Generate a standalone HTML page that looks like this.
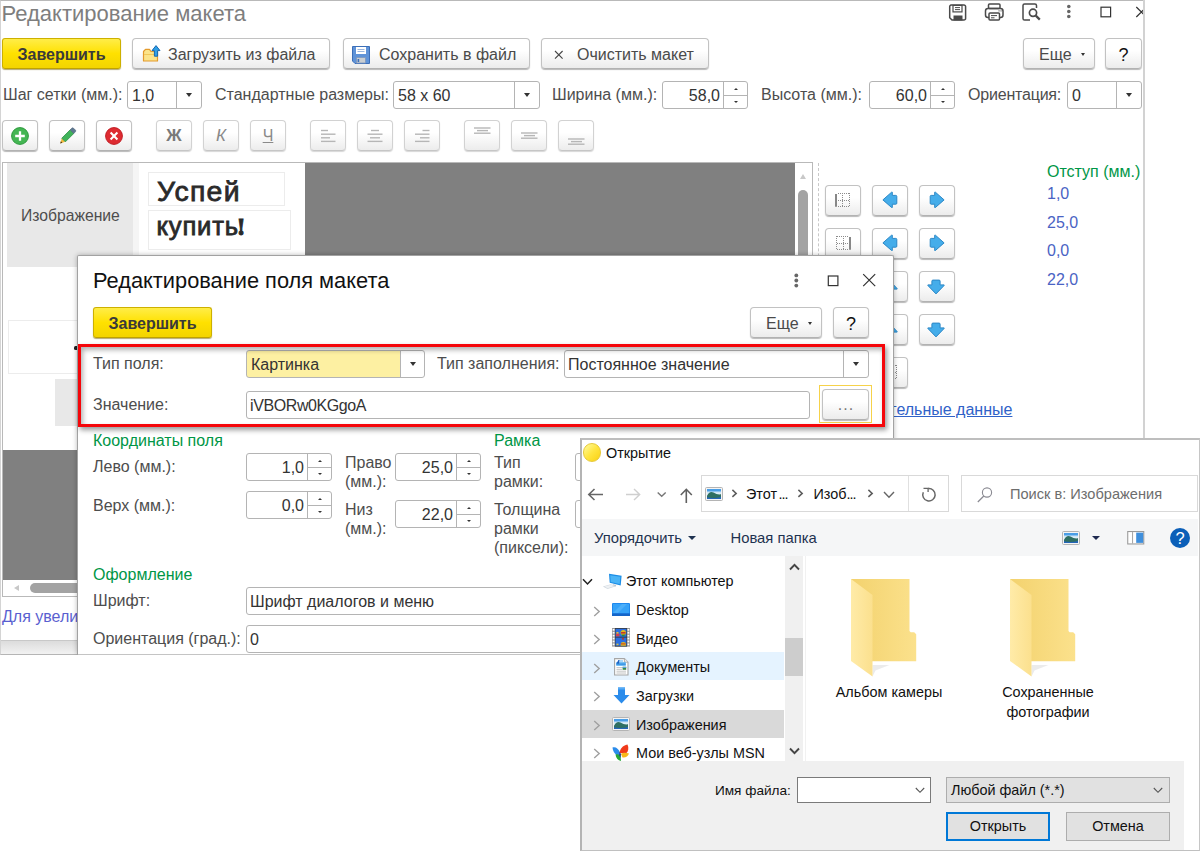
<!DOCTYPE html>
<html lang="ru"><head><meta charset="utf-8"><title>Редактирование макета</title>
<style>
html,body{margin:0;padding:0;background:#fff;}
body{width:1200px;height:853px;position:relative;overflow:hidden;font-family:"Liberation Sans",sans-serif;font-size:16px;color:#444;}
.a{position:absolute;white-space:nowrap;}
.btn{position:absolute;box-sizing:border-box;border:1px solid #c2c2c2;border-bottom-color:#b2b2b2;border-radius:4px;background:linear-gradient(#ffffff,#ffffff 40%,#ececec);box-shadow:0 1px 1px rgba(0,0,0,.28);white-space:nowrap;color:#4a4a4a;}
.ybtn{position:absolute;box-sizing:border-box;border:1px solid #cdb000;border-bottom-color:#bfa200;border-radius:3px;background:linear-gradient(#ffed48,#ffe100 50%,#f3d400);box-shadow:0 1px 1px rgba(120,100,0,.55);font-weight:bold;color:#3a3a3a;text-align:center;}
.inp{position:absolute;box-sizing:border-box;border:1px solid #b4b4b4;border-radius:3px;background:#fff;white-space:nowrap;color:#333;}
.lbl{position:absolute;white-space:nowrap;color:#4d4d4d;}
.grn{color:#009646;}
.sep{position:absolute;top:0;bottom:0;width:1px;background:#b4b4b4;}
.dd{position:absolute;width:0;height:0;border-left:3.5px solid transparent;border-right:3.5px solid transparent;border-top:4px solid #333;margin-left:.5px;margin-top:-.5px;}
.sph{position:absolute;left:61px;width:23px;top:13px;height:1px;background:#b4b4b4;}
.su{position:absolute;left:70.5px;top:6px;width:0;height:0;border-left:2px solid transparent;border-right:2px solid transparent;border-bottom:2.5px solid #333;}
.sd{position:absolute;left:70.5px;top:19px;width:0;height:0;border-left:2px solid transparent;border-right:2px solid transparent;border-top:2.5px solid #333;}
.dis{border-color:#d2d2d2;border-bottom-color:#c6c6c6;box-shadow:0 1px 1px rgba(0,0,0,.16);}
.fdt{font-size:14.4px;color:#111;}
.fdt .a{color:inherit;}
.seg{font-family:"DejaVu Sans","Liberation Sans",sans-serif;}
</style></head><body>

<!-- ================= MAIN WINDOW ================= -->
<div class="a" id="main" style="left:0;top:0;width:1145px;height:655px;box-sizing:border-box;border-top:1px solid #b9b9b9;border-left:1px solid #d4d4d4;border-right:2px solid #d2d2d2;border-bottom:1px solid #b5b5b5;background:#fff;"></div>
<div class="a" style="left:1px;top:640px;width:1142px;height:14px;border-top:1px solid #c8c8c8;box-sizing:border-box;background:linear-gradient(#dcdcdc,#f2f2f2);"></div>

<div class="a" style="left:1.5px;top:0px;font-size:22px;line-height:28px;color:#7e7e7e;">Редактирование макета</div>

<!-- title icons -->
<svg class="a" style="left:946px;top:1px;" width="197" height="24" viewBox="946 1 197 24" fill="none" stroke="#4a4a4a" stroke-width="1.5">
 <path d="M950.5 5h13.5a1.6 1.6 0 0 1 1.6 1.6v11.8a1.6 1.6 0 0 1-1.6 1.6h-12l-2.3-2.3v-11.1a1.6 1.6 0 0 1 1.6-1.6z"/>
 <rect x="953" y="5.4" width="9" height="6.5" stroke-width="1.2"/>
 <path d="M955 7.6h5M955 9.6h5" stroke-width="1"/>
 <rect x="954" y="16" width="8" height="4" fill="#4a4a4a" stroke-width="1"/>
 <rect x="988.5" y="4" width="11.5" height="4.5" rx="1"/>
 <rect x="985.5" y="8.5" width="17.5" height="9" rx="2.5"/>
 <rect x="989" y="13" width="10.5" height="7" rx="1" fill="#fff"/>
 <path d="M991 15.6h6M991 17.8h3.5" stroke-width="1"/>
 <path d="M998.6 10.8h.9M1000.6 10.8h.9" stroke-width="1.2"/>
 <path d="M1036.5 8v-2.4a1.6 1.6 0 0 0-1.6-1.6h-10.3a1.6 1.6 0 0 0-1.6 1.6v12.8a1.6 1.6 0 0 0 1.6 1.6h5.4"/>
 <circle cx="1033" cy="12.8" r="3.6" stroke-width="1.7"/>
 <path d="M1035.8 15.6l4 4" stroke-width="2.2"/>
 <g fill="#666" stroke="none"><circle cx="1068.8" cy="6.500" r="1.800"/><circle cx="1068.8" cy="11.500" r="1.800"/><circle cx="1068.8" cy="16.500" r="1.800"/></g>
 <rect x="1101" y="7.2" width="9.6" height="9.6" stroke-width="1.2" stroke="#333"/>
 <path d="M1136.3 7l10 10M1136.3 17l10-10" stroke-width="1.2" stroke="#333"/>
</svg>
<div class="a" style="left:1143px;top:0;width:2px;height:655px;background:#d2d2d2;"></div>

<!-- toolbar row 1 -->
<div class="ybtn" style="left:2px;top:38px;width:119px;height:31px;line-height:31px;">Завершить</div>
<div class="btn" style="left:132px;top:38px;width:198px;height:31px;line-height:31px;">
 <svg class="a" style="left:8px;top:5px;" width="22" height="20" viewBox="0 0 22 20"><path d="M2.5 7.5l2-2.2h4l1.5 2.2h6.5v9.5h-14z" fill="#fbe48a" stroke="#e39a2d" stroke-width="1.2" stroke-linejoin="round"/><path d="M3 10.5h13" stroke="#f1c75a" stroke-width="1"/><path d="M15 1.6l4 5h-2.4v5.6h-3.2v-5.6h-2.4z" fill="#2f9fe6" stroke="#1568b0" stroke-width="1" stroke-linejoin="round"/></svg>
 <span class="a" style="left:35px;">Загрузить из файла</span></div>
<div class="btn" style="left:343px;top:38px;width:187px;height:31px;line-height:31px;">
 <svg class="a" style="left:8px;top:7px;" width="18" height="18" viewBox="0 0 18 18"><path d="M.5.5h17v17h-14.5l-2.5-2.5z" fill="#5f93d8" stroke="#3c6fb8" stroke-width="1"/><rect x="4" y="1" width="10" height="7" fill="#fff"/><path d="M5.5 3.5h7M5.5 5.5h7" stroke="#9cb7de" stroke-width="1"/><rect x="4.5" y="11.5" width="9" height="5.5" fill="#c9ced2" stroke="#7d97bd" stroke-width=".8"/><rect x="5.6" y="13" width="1.6" height="3" fill="#3c6fb8"/></svg>
 <span class="a" style="left:35px;">Сохранить в файл</span></div>
<div class="btn" style="left:541px;top:38px;width:168px;height:31px;line-height:31px;"><svg class="a" style="left:12px;top:11px;" width="10" height="10" viewBox="0 0 10 10"><path d="M1 1l7.600 7.600M8.600 1l-7.600 7.600" stroke="#444" stroke-width="1.100" fill="none"/></svg><span class="a" style="left:35px;">Очистить макет</span></div>
<div class="btn" style="left:1023px;top:38px;width:72px;height:31px;line-height:31px;"><span class="a" style="left:15px;">Еще</span><i class="dd" style="left:56px;top:14px;border-width:3px 2.500px 0 2.500px;border-top:3px solid #333;"></i></div>
<div class="btn" style="left:1105px;top:38px;width:37px;height:31px;line-height:33.5px;text-align:center;font-size:18px;color:#111;">?</div>

<!-- row 2 -->
<div class="lbl" style="left:3px;top:86px;">Шаг сетки (мм.):</div>
<div class="inp" style="left:127px;top:81px;width:75px;height:28px;line-height:27.5px;"><span class="a" style="left:4px;">1,0</span><i class="sep" style="left:48px;"></i><i class="dd" style="left:57px;top:11px;"></i></div>
<div class="lbl" style="left:215px;top:86px;">Стандартные размеры:</div>
<div class="inp" style="left:393px;top:81px;width:147px;height:28px;line-height:27.5px;"><span class="a" style="left:4px;">58 x 60</span><i class="sep" style="left:120px;"></i><i class="dd" style="left:129px;top:11px;"></i></div>
<div class="lbl" style="left:552px;top:86px;">Ширина (мм.):</div>
<div class="inp spin" style="left:662px;top:81px;width:86px;height:28px;line-height:27.5px;"><span class="a" style="right:27px;">58,0</span><i class="sep" style="left:60px;"></i><i class="sph"></i><i class="su"></i><i class="sd"></i></div>
<div class="lbl" style="left:761px;top:86px;">Высота (мм.):</div>
<div class="inp spin" style="left:869px;top:81px;width:86px;height:28px;line-height:27.5px;"><span class="a" style="right:27px;">60,0</span><i class="sep" style="left:60px;"></i><i class="sph"></i><i class="su"></i><i class="sd"></i></div>
<div class="lbl" style="left:968px;top:86px;letter-spacing:-.2px;">Ориентация:</div>
<div class="inp" style="left:1067px;top:81px;width:75px;height:28px;line-height:27.5px;"><span class="a" style="left:4px;">0</span><i class="sep" style="left:48px;"></i><i class="dd" style="left:57px;top:11px;"></i></div>

<!-- row 3 -->
<div class="btn" style="left:2px;top:120px;width:36px;height:31px;"><svg class="a" style="left:7px;top:5px;" width="20" height="20" viewBox="0 0 20 20"><circle cx="10" cy="10" r="8.4" fill="#44b653" stroke="#2f9b3f" stroke-width="1"/><path d="M10 5.2v9.6M5.2 10h9.6" stroke="#fff" stroke-width="2.3"/></svg></div>
<div class="btn" style="left:49px;top:120px;width:36px;height:31px;"><svg class="a" style="left:6.5px;top:3.5px;" width="22" height="22" viewBox="0 0 22 22"><path d="M3.2 18.4l1.6-5.2 3.6 3.6z" fill="#f2b93c"/><path d="M3.2 18.4l.7-2.2 1.5 1.5z" fill="#4a3a20"/><path d="M4.8 13.2l8.4-8.4 3.6 3.6-8.4 8.4z" fill="#41b35a" stroke="#2d8f45" stroke-width=".8"/><path d="M13.2 4.8l1.6-1.6a1.2 1.2 0 0 1 1.7 0l1.9 1.9a1.2 1.2 0 0 1 0 1.7l-1.6 1.6z" fill="#5f7890" stroke="#4a6078" stroke-width=".6"/></svg></div>
<div class="btn" style="left:96px;top:120px;width:36px;height:31px;"><svg class="a" style="left:7px;top:5px;" width="20" height="20" viewBox="0 0 20 20"><circle cx="10" cy="10" r="8.4" fill="#de2b31" stroke="#c21f26" stroke-width="1"/><path d="M6.6 6.6l6.8 6.8M13.4 6.6l-6.8 6.8" stroke="#fff" stroke-width="2.1"/></svg></div>
<div class="btn dis" style="left:156px;top:120px;width:36px;height:31px;"><span class="a" style="left:0;width:34px;text-align:center;top:0;line-height:29px;font-weight:bold;color:#7a7a7a;font-size:17px;">Ж</span></div>
<div class="btn dis" style="left:203px;top:120px;width:36px;height:31px;"><span class="a" style="left:0;width:34px;text-align:center;top:0;line-height:29px;font-style:italic;color:#8a8a8a;font-size:17px;">К</span></div>
<div class="btn dis" style="left:250px;top:120px;width:36px;height:31px;"><span class="a" style="left:0;width:34px;text-align:center;top:0;line-height:29px;color:#8a8a8a;font-size:16px;text-decoration:underline;">Ч</span></div>
<div class="btn dis" style="left:310px;top:120px;width:36px;height:31px;"><svg class="a" style="left:0;top:0;" width="34" height="29" viewBox="0 0 34 29" stroke="#b6b6b6" stroke-width="1.4"><path d="M10 9.5h7"/><path d="M10 13.2h14.5"/><path d="M10 16.8h9"/><path d="M10 20.4h14.5"/></svg></div>
<div class="btn dis" style="left:357px;top:120px;width:36px;height:31px;"><svg class="a" style="left:0;top:0;" width="34" height="29" viewBox="0 0 34 29" stroke="#b6b6b6" stroke-width="1.4"><path d="M13 9.5h8"/><path d="M9.5 13.2h15.0"/><path d="M12 16.8h10"/><path d="M9.5 20.4h15.0"/></svg></div>
<div class="btn dis" style="left:404px;top:120px;width:36px;height:31px;"><svg class="a" style="left:0;top:0;" width="34" height="29" viewBox="0 0 34 29" stroke="#b6b6b6" stroke-width="1.4"><path d="M17.5 9.5h7.0"/><path d="M10 13.2h14.5"/><path d="M15 16.8h9.5"/><path d="M10 20.4h14.5"/></svg></div>
<div class="btn dis" style="left:464px;top:120px;width:36px;height:31px;"><svg class="a" style="left:0;top:0;" width="34" height="29" viewBox="0 0 34 29" stroke="#b6b6b6" stroke-width="1.4"><path d="M9 7h16.5"/><path d="M12 9.6h11"/><path d="M9 12.2h16.5"/></svg></div>
<div class="btn dis" style="left:511px;top:120px;width:36px;height:31px;"><svg class="a" style="left:0;top:0;" width="34" height="29" viewBox="0 0 34 29" stroke="#b6b6b6" stroke-width="1.4"><path d="M9 12h16.5"/><path d="M12 14.6h11"/><path d="M9 17.2h16.5"/></svg></div>
<div class="btn dis" style="left:558px;top:120px;width:36px;height:31px;"><svg class="a" style="left:0;top:0;" width="34" height="29" viewBox="0 0 34 29" stroke="#b6b6b6" stroke-width="1.4"><path d="M9 18h16.5"/><path d="M12 20.6h11"/><path d="M9 23.2h16.5"/></svg></div>

<!-- canvas -->
<div class="a" style="left:2px;top:162px;width:811px;height:435px;box-sizing:border-box;border:1px solid #b9b9b9;background:#fff;"></div>
<div class="a" style="left:3px;top:163px;width:792px;height:417px;background:#808080;"></div>
<div class="a" style="left:3px;top:163px;width:302px;height:287px;background:#fff;"></div>
<div class="a" style="left:7px;top:163px;width:126px;height:104px;background:#e8e8e8;"></div>
<div class="a" style="left:133px;top:163px;width:6px;height:104px;background:#f5f5f5;"></div>
<div class="a" style="left:21px;top:206px;font-size:15.7px;line-height:19px;color:#4d4d4d;">Изображение</div>
<div class="a" style="left:148px;top:172px;width:137px;height:34px;box-sizing:border-box;border:1px solid #ececec;"></div>
<div class="a" style="left:148px;top:210px;width:143px;height:40px;box-sizing:border-box;border:1px solid #ececec;"></div>
<div class="a" style="left:157px;top:175px;font-size:28.4px;line-height:32px;color:#2a2a2a;-webkit-text-stroke:.8px #2a2a2a;letter-spacing:1.3px;">Успей</div>
<div class="a" style="left:156.5px;top:210px;font-size:25.6px;line-height:32px;color:#2a2a2a;-webkit-text-stroke:.8px #2a2a2a;letter-spacing:.8px;">купить<span style="font-family:'DejaVu Serif','Liberation Serif',serif;font-size:22px;margin-left:-2.5px;font-weight:bold;-webkit-text-stroke:.9px #2a2a2a;letter-spacing:0;">!</span></div>
<div class="a" style="left:8px;top:320px;width:80px;height:54px;box-sizing:border-box;border:1px solid #ececec;"></div>
<div class="a" style="left:73.5px;top:345.5px;width:5px;height:4px;background:#222;border-radius:1.5px;"></div>
<div class="a" style="left:55px;top:379px;width:40px;height:47px;background:#e8e8e8;"></div>
<!-- canvas scrollbars -->
<div class="a" style="left:795px;top:163px;width:17px;height:433px;background:#fff;"></div>
<div class="a" style="left:798px;top:190px;width:10px;height:200px;background:#a3a3a3;border-radius:5px;"></div>
<div class="a" style="left:800px;top:174px;width:0;height:0;border-left:3px solid transparent;border-right:3px solid transparent;border-bottom:5px solid #c8c8c8;"></div>
<div class="a" style="left:3px;top:580px;width:792px;height:16px;background:#fff;"></div>
<div class="a" style="left:30px;top:583px;width:200px;height:10px;background:#a3a3a3;border-radius:5px;"></div>
<div class="a" style="left:14px;top:585px;width:0;height:0;border-top:3px solid transparent;border-bottom:3px solid transparent;border-right:5px solid #c8c8c8;"></div>
<div class="a" style="left:2px;top:607px;font-size:16px;line-height:19px;color:#5a5fd0;">Для увеличения</div>

<!-- right panel -->
<div class="a" style="left:818px;top:163px;width:0;height:440px;border-left:1px dashed #c8c8c8;"></div>
<div class="btn" style="left:825px;top:185px;width:36px;height:31px;"><svg class="a" style="left:-1px;top:-1px;" width="36" height="31" viewBox="0 0 36 31"><g><g stroke="#8c8c8c" stroke-width="1" stroke-dasharray="1 1" fill="none"><path d="M13 8.500h12M13 15.500h12M13 21.500h12M17.500 8v14M24.500 8v14"/></g><path d="M11 9v12.800" stroke="#7a7a7a" stroke-width="1.800"/></g></svg></div>
<div class="btn" style="left:872px;top:185px;width:36px;height:31px;"><svg class="a" style="left:-1px;top:-1px;" width="36" height="31" viewBox="0 0 36 31"><path d="M10.9 14.9L19.6 7.2h.7v3.2h3.5q1 0 1 1v6.800q0 1-1 1h-3.500v3.300h-.700z" fill="#45adea" stroke="#2b87c6" stroke-width="1" stroke-linejoin="round"/></svg></div>
<div class="btn" style="left:919px;top:185px;width:36px;height:31px;"><svg class="a" style="left:-1px;top:-1px;" width="36" height="31" viewBox="0 0 36 31"><path d="M10.9 14.9L19.6 7.2h.7v3.2h3.5q1 0 1 1v6.800q0 1-1 1h-3.500v3.300h-.700z" transform="translate(36,0) scale(-1,1)" fill="#45adea" stroke="#2b87c6" stroke-width="1" stroke-linejoin="round"/></svg></div>
<div class="btn" style="left:825px;top:228px;width:36px;height:31px;"><svg class="a" style="left:-1px;top:-1px;" width="36" height="31" viewBox="0 0 36 31"><g transform="translate(36,0) scale(-1,1)"><g stroke="#8c8c8c" stroke-width="1" stroke-dasharray="1 1" fill="none"><path d="M13 8.500h12M13 15.500h12M13 21.500h12M17.500 8v14M24.500 8v14"/></g><path d="M11 9v12.800" stroke="#7a7a7a" stroke-width="1.800"/></g></svg></div>
<div class="btn" style="left:872px;top:228px;width:36px;height:31px;"><svg class="a" style="left:-1px;top:-1px;" width="36" height="31" viewBox="0 0 36 31"><path d="M10.9 14.9L19.6 7.2h.7v3.2h3.5q1 0 1 1v6.800q0 1-1 1h-3.500v3.300h-.700z" fill="#45adea" stroke="#2b87c6" stroke-width="1" stroke-linejoin="round"/></svg></div>
<div class="btn" style="left:919px;top:228px;width:36px;height:31px;"><svg class="a" style="left:-1px;top:-1px;" width="36" height="31" viewBox="0 0 36 31"><path d="M10.9 14.9L19.6 7.2h.7v3.2h3.5q1 0 1 1v6.800q0 1-1 1h-3.500v3.300h-.700z" transform="translate(36,0) scale(-1,1)" fill="#45adea" stroke="#2b87c6" stroke-width="1" stroke-linejoin="round"/></svg></div>
<div class="btn" style="left:825px;top:271px;width:36px;height:31px;"><svg class="a" style="left:-1px;top:-1px;" width="36" height="31" viewBox="0 0 36 31"><g><g stroke="#8c8c8c" stroke-width="1" stroke-dasharray="1 1" fill="none"><path d="M13 8.500h12M13 15.500h12M13 21.500h12M17.500 8v14M24.500 8v14"/></g><path d="M11 9v12.800" stroke="#7a7a7a" stroke-width="1.800"/></g></svg></div>
<div class="btn" style="left:872px;top:271px;width:36px;height:31px;"><svg class="a" style="left:-1px;top:-1px;" width="36" height="31" viewBox="0 0 36 31"><path d="M17 22.9L8.900 14.500v-.600h4v-3.800q0-1 1-1h6.200q1 0 1 1v3.800h4v.600z" transform="translate(0,32) scale(1,-1)" fill="#45adea" stroke="#2b87c6" stroke-width="1" stroke-linejoin="round"/></svg></div>
<div class="btn" style="left:919px;top:271px;width:36px;height:31px;"><svg class="a" style="left:-1px;top:-1px;" width="36" height="31" viewBox="0 0 36 31"><path d="M17 22.9L8.900 14.500v-.600h4v-3.800q0-1 1-1h6.200q1 0 1 1v3.800h4v.600z" fill="#45adea" stroke="#2b87c6" stroke-width="1" stroke-linejoin="round"/></svg></div>
<div class="btn" style="left:825px;top:314px;width:36px;height:31px;"><svg class="a" style="left:-1px;top:-1px;" width="36" height="31" viewBox="0 0 36 31"><g><g stroke="#8c8c8c" stroke-width="1" stroke-dasharray="1 1" fill="none"><path d="M13 8.500h12M13 15.500h12M13 21.500h12M17.500 8v14M24.500 8v14"/></g><path d="M11 9v12.800" stroke="#7a7a7a" stroke-width="1.800"/></g></svg></div>
<div class="btn" style="left:872px;top:314px;width:36px;height:31px;"><svg class="a" style="left:-1px;top:-1px;" width="36" height="31" viewBox="0 0 36 31"><path d="M17 22.9L8.900 14.500v-.600h4v-3.800q0-1 1-1h6.200q1 0 1 1v3.800h4v.600z" transform="translate(0,32) scale(1,-1)" fill="#45adea" stroke="#2b87c6" stroke-width="1" stroke-linejoin="round"/></svg></div>
<div class="btn" style="left:919px;top:314px;width:36px;height:31px;"><svg class="a" style="left:-1px;top:-1px;" width="36" height="31" viewBox="0 0 36 31"><path d="M17 22.9L8.900 14.500v-.600h4v-3.800q0-1 1-1h6.200q1 0 1 1v3.800h4v.600z" fill="#45adea" stroke="#2b87c6" stroke-width="1" stroke-linejoin="round"/></svg></div>
<div class="btn" style="left:825px;top:357px;width:36px;height:31px;"><svg class="a" style="left:-1px;top:-1px;" width="36" height="31" viewBox="0 0 36 31"><g><g stroke="#8c8c8c" stroke-width="1" stroke-dasharray="1 1" fill="none"><path d="M13 8.500h12M13 15.500h12M13 21.500h12M17.500 8v14M24.500 8v14"/></g><path d="M11 9v12.800" stroke="#7a7a7a" stroke-width="1.800"/></g></svg></div>
<div class="btn" style="left:872px;top:357px;width:36px;height:31px;"><svg class="a" style="left:-1px;top:-1px;" width="36" height="31" viewBox="0 0 36 31"><g><g stroke="#8c8c8c" stroke-width="1" stroke-dasharray="1 1" fill="none"><path d="M13 8.500h12M13 15.500h12M13 21.500h12M17.500 8v14M24.500 8v14"/></g><path d="M11 9v12.800" stroke="#7a7a7a" stroke-width="1.800"/></g></svg></div>
<div class="a grn" style="left:1047px;top:162px;font-size:16px;line-height:19px;">Отступ (мм.)</div>
<div class="a" style="left:1047px;top:184px;font-size:16px;line-height:19px;color:#4a63c4;">1,0</div>
<div class="a" style="left:1047px;top:213px;font-size:16px;line-height:19px;color:#4a63c4;">25,0</div>
<div class="a" style="left:1047px;top:241px;font-size:16px;line-height:19px;color:#4a63c4;">0,0</div>
<div class="a" style="left:1047px;top:270px;font-size:16px;line-height:19px;color:#4a63c4;">22,0</div>
<div class="a" style="left:825px;top:400px;font-size:16px;line-height:19px;color:#2f62c8;text-decoration:underline;">Дополнительные данные</div>

<!-- ================= FIELD DIALOG ================= -->
<div class="a" id="dlg" style="left:77px;top:255px;width:817px;height:400px;box-sizing:border-box;border:1px solid #a2a2a2;border-bottom:none;border-radius:2px 2px 0 0;background:#fff;box-shadow:0 0 5px rgba(0,0,0,.28);clip-path:inset(-10px -10px 0 -10px);"></div>
<div class="a" style="left:78px;top:654px;width:815px;height:1px;background:#c4c4c4;"></div>
<div class="a" style="left:93px;top:266.5px;font-size:21.8px;line-height:28px;color:#111;">Редактирование поля макета</div>
<svg class="a" style="left:790px;top:270px;" width="92" height="22" viewBox="790 270 92 22" fill="none" stroke="#333" stroke-width="1.2">
 <g fill="#666" stroke="none"><circle cx="796.3" cy="275.4" r="1.900"/><circle cx="796.3" cy="280.5" r="1.900"/><circle cx="796.3" cy="285.6" r="1.900"/></g>
 <rect x="828.3" y="276" width="9.6" height="9.6"/>
 <path d="M863.2 274.2l12 12M863.2 286.2l12-12"/>
</svg>
<div class="ybtn" style="left:93px;top:307px;width:119px;height:31px;line-height:31px;">Завершить</div>
<div class="btn" style="left:750px;top:307px;width:72px;height:31px;line-height:31px;"><span class="a" style="left:15px;">Еще</span><i class="dd" style="left:56px;top:14px;border-width:3px 2.500px 0 2.500px;border-top:3px solid #333;"></i></div>
<div class="btn" style="left:833px;top:307px;width:36px;height:31px;line-height:33.5px;text-align:center;font-size:18px;color:#111;">?</div>

<div class="lbl" style="left:93px;top:355px;">Тип поля:</div>
<div class="inp" style="left:246px;top:350px;width:179px;height:28px;line-height:27.5px;background:linear-gradient(90deg,#fdf0a2 0,#fdf0a2 153px,#fff 153px);"><span class="a" style="left:4px;">Картинка</span><i class="sep" style="left:153px;"></i><i class="dd" style="left:162px;top:11px;"></i></div>
<div class="lbl" style="left:437px;top:355px;">Тип заполнения:</div>
<div class="inp" style="left:564px;top:350px;width:305px;height:28px;line-height:27.5px;"><span class="a" style="left:3px;">Постоянное значение</span><i class="sep" style="left:278px;"></i><i class="dd" style="left:287px;top:11px;"></i></div>
<div class="lbl" style="left:93px;top:396px;">Значение:</div>
<div class="inp" style="left:246px;top:391px;width:564px;height:28px;line-height:27.5px;"><span class="a" style="left:3px;letter-spacing:-.4px;">iVBORw0KGgoA</span></div>
<div class="a" style="left:819px;top:385px;width:53px;height:38px;box-sizing:border-box;border:1px solid #f6d24a;"></div>
<div class="btn" style="left:822px;top:389px;width:47px;height:31px;line-height:31px;text-align:center;color:#777;letter-spacing:1.1px;text-indent:1px;line-height:29px;">...</div>
<!-- red highlight -->
<div class="a" style="left:77.5px;top:344px;width:807.5px;height:83px;box-sizing:border-box;border:3.5px solid #f5060a;box-shadow:2px 3px 5px rgba(0,0,0,.4), inset 2px 3px 5px rgba(0,0,0,.3);"></div>

<div class="a grn" style="left:93px;top:431px;line-height:19px;">Координаты поля</div>
<div class="lbl" style="left:93px;top:458px;">Лево (мм.):</div>
<div class="inp spin" style="left:246px;top:453px;width:86px;height:28px;line-height:27.5px;"><span class="a" style="right:27px;">1,0</span><i class="sep" style="left:60px;"></i><i class="sph"></i><i class="su"></i><i class="sd"></i></div>
<div class="lbl" style="left:93px;top:497px;">Верх (мм.):</div>
<div class="inp spin" style="left:246px;top:491px;width:86px;height:28px;line-height:27.5px;"><span class="a" style="right:27px;">0,0</span><i class="sep" style="left:60px;"></i><i class="sph"></i><i class="su"></i><i class="sd"></i></div>
<div class="lbl" style="left:345px;top:453px;line-height:19px;">Право<br>(мм.):</div>
<div class="inp spin" style="left:395px;top:453px;width:86px;height:28px;line-height:27.5px;"><span class="a" style="right:27px;">25,0</span><i class="sep" style="left:60px;"></i><i class="sph"></i><i class="su"></i><i class="sd"></i></div>
<div class="lbl" style="left:345px;top:500px;line-height:19px;">Низ<br>(мм.):</div>
<div class="inp spin" style="left:395px;top:500px;width:86px;height:28px;line-height:27.5px;"><span class="a" style="right:27px;">22,0</span><i class="sep" style="left:60px;"></i><i class="sph"></i><i class="su"></i><i class="sd"></i></div>
<div class="a grn" style="left:494px;top:431px;line-height:19px;">Рамка</div>
<div class="lbl" style="left:494px;top:453px;line-height:19px;">Тип<br>рамки:</div>
<div class="lbl" style="left:494px;top:500px;line-height:19px;">Толщина<br>рамки<br>(пиксели):</div>
<div class="inp" style="left:575px;top:453px;width:86px;height:28px;"></div>
<div class="inp" style="left:575px;top:500px;width:86px;height:28px;"></div>
<div class="a grn" style="left:93px;top:565px;line-height:19px;">Оформление</div>
<div class="lbl" style="left:93px;top:592px;">Шрифт:</div>
<div class="inp" style="left:246px;top:587px;width:400px;height:28px;line-height:27.5px;"><span class="a" style="left:3px;">Шрифт диалогов и меню</span></div>
<div class="lbl" style="left:93px;top:630px;">Ориентация (град.):</div>
<div class="inp" style="left:246px;top:625px;width:400px;height:28px;line-height:27.5px;"><span class="a" style="left:3px;">0</span></div>

<!-- ================= FILE DIALOG ================= -->
<div class="a" id="fd" style="left:580px;top:438px;width:619.5px;height:413px;box-sizing:border-box;border:1.5px solid #c6c6c6;border-top:2px solid #bebebe;border-left:2px solid #b4b4b4;border-bottom:1px solid #c0c0c0;background:#fff;font-size:14.4px;color:#111;"></div>
<div class="fdt">
<div class="a" style="left:582.5px;top:443px;width:18.5px;height:18.5px;border-radius:50%;box-sizing:border-box;border:1px solid #e6c93a;background:linear-gradient(135deg,#fff78e 10%,#ffe540 50%,#fbd51a 90%);"></div>
<div class="a" style="left:606px;top:444px;line-height:18px;">Открытие</div>
<!-- nav -->
<svg class="a" style="left:586px;top:486px;" width="110" height="18" viewBox="586 486 110 18" fill="none" stroke-width="1.400">
 <path d="M603 494.500h-14M594.500 489l-5.700 5.500 5.700 5.500" stroke="#666" stroke-width="1.600"/>
 <path d="M626 494.500h13.500M634 489l5.700 5.500-5.700 5.500" stroke="#cfcfcf"/>
 <path d="M657.700 492.500l4 3.800 4-3.800" stroke="#777"/>
 <path d="M686.300 503v-13.500M680.800 495l5.500-5.700 5.500 5.700" stroke="#606060" stroke-width="1.600"/>
</svg>
<div class="a" style="left:701px;top:475px;width:248px;height:37px;box-sizing:border-box;border:1px solid #d9d9d9;background:#fff;"></div>
<div class="a" style="left:908px;top:476px;width:1px;height:35px;background:#e0e0e0;"></div>
<svg class="a" style="left:705px;top:487px;" width="18" height="14" viewBox="0 0 18 14"><rect x=".5" y=".5" width="17" height="13" rx="1" fill="#f4f4f4" stroke="#b4b4b4"/><rect x="2" y="2" width="14" height="10" fill="#4a9ee6"/><path d="M2 4.500h14v3.500h-14z" fill="#cfe6f6"/><path d="M2 6.500h14v2h-14z" fill="#eaf4fb"/><path d="M2 9c1.500-3.500 4-5 6.500-3.500 2.500 1.500 5 2.300 7.500 1.800v4.700h-14z" fill="#2f6f62"/><path d="M2 10.200c4 1 9 1 14-.2v2h-14z" fill="#2566b8"/></svg>
<svg class="a" style="left:731px;top:489px;" width="8" height="9" viewBox="0 0 8 9"><path d="M1.400 .9l3.800 3.500-3.800 3.500" fill="none" stroke="#5c5c5c" stroke-width="1.500"/></svg>
<div class="a" style="left:746px;top:484px;line-height:20px;font-size:14.4px;word-spacing:-2.600px;">Этот <span style="letter-spacing:-1px;">...</span></div>
<svg class="a" style="left:797px;top:489px;" width="8" height="9" viewBox="0 0 8 9"><path d="M1.400 .9l3.800 3.500-3.800 3.500" fill="none" stroke="#5c5c5c" stroke-width="1.500"/></svg>
<div class="a" style="left:813.5px;top:484px;line-height:20px;font-size:14.4px;">Изоб<span style="letter-spacing:-1px;">...</span></div>
<svg class="a" style="left:867px;top:489px;" width="8" height="9" viewBox="0 0 8 9"><path d="M1.400 .9l3.800 3.500-3.800 3.500" fill="none" stroke="#5c5c5c" stroke-width="1.500"/></svg>
<svg class="a" style="left:883px;top:491px;" width="12" height="8" viewBox="0 0 12 8"><path d="M1 1l5 5.200 5-5.200" fill="none" stroke="#666" stroke-width="1.400"/></svg>
<svg class="a" style="left:920px;top:485px;" width="18" height="18" viewBox="920 485 18 18" fill="none" stroke="#666" stroke-width="1.5"><path d="M928.2 488.6A6.2 6.2 0 1 1 923.3 492.2"/><path d="M923.5 488.3h4.600v3.800" stroke-width="1.300"/></svg>
<div class="a" style="left:961px;top:475px;width:237px;height:37px;box-sizing:border-box;border:1px solid #d9d9d9;background:#fff;"></div>
<svg class="a" style="left:976px;top:486px;" width="18" height="18" viewBox="0 0 18 18"><circle cx="11" cy="6.500" r="4.600" fill="none" stroke="#8a8a92" stroke-width="1.100"/><path d="M7.800 10l-6 6" stroke="#8a8a92" stroke-width="1.200"/></svg>
<div class="a" style="left:1010px;top:484px;line-height:20px;color:#6d6d6d;font-size:14.600px;">Поиск в: Изображения</div>
<!-- command bar -->
<div class="a" style="left:582px;top:519px;width:616px;height:37px;background:#f5f6f7;"></div>
<div class="a" style="left:594px;top:528px;line-height:20px;color:#1e3250;font-size:14.8px;">Упорядочить</div>
<div class="a" style="left:688px;top:536px;width:0;height:0;border-left:4px solid transparent;border-right:4px solid transparent;border-top:4px solid #1e3250;"></div>
<div class="a" style="left:730.5px;top:528px;line-height:20px;color:#1e3250;font-size:14.8px;">Новая папка</div>
<svg class="a" style="left:1062px;top:531px;" width="18" height="14" viewBox="0 0 18 14"><rect x=".5" y=".5" width="17" height="13" rx="1" fill="#f4f4f4" stroke="#b4b4b4"/><rect x="2" y="2" width="14" height="10" fill="#4a9ee6"/><path d="M2 4.500h14v3.500h-14z" fill="#cfe6f6"/><path d="M2 6.500h14v2h-14z" fill="#eaf4fb"/><path d="M2 9c1.500-3.500 4-5 6.500-3.500 2.500 1.500 5 2.300 7.500 1.800v4.700h-14z" fill="#2f6f62"/><path d="M2 10.200c4 1 9 1 14-.2v2h-14z" fill="#2566b8"/></svg>
<div class="a" style="left:1092px;top:536px;width:0;height:0;border-left:4px solid transparent;border-right:4px solid transparent;border-top:4px solid #1e2a50;"></div>
<svg class="a" style="left:1127px;top:531px;" width="17.5" height="13.500" viewBox="0 0 19 15"><rect x=".6" y=".6" width="17.800" height="13.800" fill="#fff" stroke="#9a9a9a" stroke-width="1.200"/><rect x="5.500" y="1.200" width="1" height="12.600" fill="#9a9a9a"/><rect x="10" y="1.800" width="7.800" height="11.400" fill="#3f8fdc"/></svg>
<div class="a" style="left:1170px;top:528px;width:20px;height:20px;border-radius:50%;background:#0b5fb8;color:#fff;font-size:16.5px;line-height:20.5px;text-align:center;">?</div>
<!-- tree -->
<div class="a" style="left:582px;top:652px;width:202px;height:28px;background:#e5f3ff;"></div>
<div class="a" style="left:582px;top:710px;width:202px;height:28px;background:#d9d9d9;"></div>
<div class="a" style="left:785px;top:556px;width:18px;height:205px;background:#f0f0f0;"></div>
<div class="a" style="left:805px;top:556px;width:1px;height:205px;background:#f1f1f1;"></div>
<div class="a" style="left:785px;top:638px;width:18px;height:38px;background:#cdcdcd;"></div>
<svg class="a" style="left:789px;top:563px;" width="11" height="8" viewBox="0 0 11 8"><path d="M1 6.500l4.500-4.700 4.500 4.700" fill="none" stroke="#444" stroke-width="1.900"/></svg>
<svg class="a" style="left:789px;top:747px;" width="11" height="8" viewBox="0 0 11 8"><path d="M1 1.500l4.500 4.700 4.500-4.700" fill="none" stroke="#444" stroke-width="1.900"/></svg>
<svg class="a" style="left:582px;top:578px;" width="11" height="8" viewBox="0 0 11 8"><path d="M1 1.200l4.500 4.800 4.500-4.800" fill="none" stroke="#222" stroke-width="1.500"/></svg>
<svg class="a" style="left:602px;top:573px;" width="22" height="17" viewBox="0 0 22 17"><path d="M7 .8l12.600 2-.9 9.600-11-2.600z" fill="#1b8de6"/><path d="M8.200 2.200l10.200 1.600-.7 7.200-9-2.100z" fill="#4ab4f6"/><path d="M11 11.300l3.200 .8-.5 1.500-3.600-.6z" fill="#b9c4cc"/><path d="M.8 13.400l8-2.200 5.200 2-8.500 2.900z" fill="#d3dae0"/><path d="M2.500 13.500l6.300-1.700 3.400 1.300-6.600 2.100z" fill="#eef1f4"/></svg>
<div class="a" style="left:626px;top:571px;line-height:20px;">Этот компьютер</div>
<svg class="a" style="left:593px;top:605.5px;" width="8" height="11" viewBox="0 0 8 11"><path d="M1.200 1l5 4.500-5 4.500" fill="none" stroke="#a0a0a0" stroke-width="1.400"/></svg>
<svg class="a" style="left:612px;top:603px;" width="18" height="13" viewBox="0 0 18 13"><rect width="18" height="13" rx="1" fill="#1e88ee"/><path d="M1 1h16v9h-16z" fill="#35a2f8"/><path d="M1 10l9-9h5l-9 9z" fill="#5bb8fb" opacity=".6"/><rect y="10.500" width="18" height="2.500" fill="#1565c8"/></svg>
<div class="a" style="left:636px;top:600px;line-height:20px;">Desktop</div>
<svg class="a" style="left:593px;top:634px;" width="8" height="11" viewBox="0 0 8 11"><path d="M1.200 1l5 4.500-5 4.500" fill="none" stroke="#a0a0a0" stroke-width="1.400"/></svg>
<svg class="a" style="left:612px;top:628px;" width="18" height="19" viewBox="0 0 18 19"><rect width="18" height="18.600" fill="#9c9c9c"/><rect x="2.900" width="12.200" height="18.600" fill="#3a3a3a"/><rect x=".7" y="1" width="1.8" height="1.7" fill="#fff"/><rect x="15.500" y="1" width="1.8" height="1.7" fill="#fff"/><rect x=".7" y="3.9" width="1.8" height="1.7" fill="#fff"/><rect x="15.500" y="3.9" width="1.8" height="1.7" fill="#fff"/><rect x=".7" y="6.8" width="1.8" height="1.7" fill="#fff"/><rect x="15.500" y="6.8" width="1.8" height="1.7" fill="#fff"/><rect x=".7" y="9.7" width="1.8" height="1.7" fill="#fff"/><rect x="15.500" y="9.7" width="1.8" height="1.7" fill="#fff"/><rect x=".7" y="12.6" width="1.8" height="1.7" fill="#fff"/><rect x="15.500" y="12.6" width="1.8" height="1.7" fill="#fff"/><rect x=".7" y="15.5" width="1.8" height="1.7" fill="#fff"/><rect x="15.500" y="15.5" width="1.8" height="1.7" fill="#fff"/><rect x="3.500" y=".8" width="11" height="7.900" fill="#2b6fe0"/><rect x="3.500" y="9.600" width="11" height="8.200" fill="#2b6fe0"/><circle cx="11.300" cy="4.600" r="2.700" fill="#e2b81a"/><path d="M9 4h4.600v1.600h-4.600z" fill="#c23a2a"/><path d="M9.500 6.500h3.600l-1 1.800h-1.600z" fill="#2a8a3a"/><path d="M4 5.500h3.500v2.800h-3.500z" fill="#d8404a"/><path d="M4.500 4h2v1.600h-2z" fill="#e8c030"/><circle cx="11" cy="10.800" r="1.100" fill="#a83a3a"/><path d="M8.700 16.200a2.600 2.300 0 0 1 5.200 0v1.600h-5.200z" fill="#e2b81a"/><path d="M9 15.400h4.600v1h-4.600z" fill="#c23a2a"/><rect x="4.500" y="15.600" width="2" height="1.600" fill="#d8c040"/></svg>
<div class="a" style="left:636px;top:628.500px;line-height:20px;">Видео</div>
<svg class="a" style="left:593px;top:662.5px;" width="8" height="11" viewBox="0 0 8 11"><path d="M1.200 1l5 4.500-5 4.500" fill="none" stroke="#a0a0a0" stroke-width="1.400"/></svg>
<svg class="a" style="left:614px;top:658px;" width="15" height="18" viewBox="0 0 15 18"><path d="M.6.600h9.800l3.600 3.600v12.800h-13.400z" fill="#fff" stroke="#a6a6a6" stroke-width="1.100"/><path d="M10.400.600v3.600h3.600" fill="#ececec" stroke="#a6a6a6" stroke-width=".9"/><path d="M2.200 4.200h9.600v3.600h-9.600z" fill="#56b0f2"/><path d="M2.400 5.800l2-3.800h1.200l-.6 3.800z" fill="#1c5fc0"/><path d="M5.500 3h3.500" stroke="#56b0f2" stroke-width="1"/><path d="M2.200 6.200h9.600" stroke="#2f86dc" stroke-width=".8"/><path d="M2.500 9.600h5.500M2.500 11.400h5.500M2.500 13.200h9.500M2.500 15h9.500" stroke="#bdbdbd" stroke-width=".9"/><rect x="8.600" y="8.800" width="3.600" height="3" fill="#3a8a4a"/><rect x="8.600" y="8.800" width="3.600" height="1.200" fill="#5aa0e0"/></svg>
<div class="a" style="left:636px;top:657px;line-height:20px;">Документы</div>
<svg class="a" style="left:593px;top:691px;" width="8" height="11" viewBox="0 0 8 11"><path d="M1.200 1l5 4.500-5 4.500" fill="none" stroke="#a0a0a0" stroke-width="1.400"/></svg>
<svg class="a" style="left:613px;top:687px;" width="17" height="17" viewBox="0 0 17 17"><path d="M5 .500h7v7.500h4.500l-8 8.500-8-8.500h4.500z" fill="#2b8ceb"/><path d="M5 .500h7v2h-7z" fill="#55aaf5"/></svg>
<div class="a" style="left:636px;top:685.500px;line-height:20px;">Загрузки</div>
<svg class="a" style="left:593px;top:719.5px;" width="8" height="11" viewBox="0 0 8 11"><path d="M1.200 1l5 4.500-5 4.500" fill="none" stroke="#a0a0a0" stroke-width="1.400"/></svg>
<svg class="a" style="left:612px;top:717px;" width="18" height="14" viewBox="0 0 18 14"><rect x=".5" y=".5" width="17" height="13" rx="1" fill="#f4f4f4" stroke="#b4b4b4"/><rect x="2" y="2" width="14" height="10" fill="#4a9ee6"/><path d="M2 4.500h14v3.500h-14z" fill="#cfe6f6"/><path d="M2 6.500h14v2h-14z" fill="#eaf4fb"/><path d="M2 9c1.500-3.500 4-5 6.500-3.500 2.500 1.500 5 2.300 7.500 1.800v4.700h-14z" fill="#2f6f62"/><path d="M2 10.200c4 1 9 1 14-.2v2h-14z" fill="#2566b8"/></svg>
<div class="a" style="left:636px;top:714.500px;line-height:20px;">Изображения</div>
<svg class="a" style="left:593px;top:748px;" width="8" height="11" viewBox="0 0 8 11"><path d="M1.200 1l5 4.500-5 4.500" fill="none" stroke="#a0a0a0" stroke-width="1.400"/></svg>
<svg class="a" style="left:612px;top:744px;" width="18" height="18" viewBox="0 0 18 18"><path d="M.5 3.500c3-1 6 1 7.500 5l-1.500 3.500c-3-1-5.500-4-6-8.500z" fill="#2b8ceb"/><path d="M7.500 9c.5-4 3-7.500 8-8.500 1.500 3.500 1 7-1.500 9z" fill="#f03a1a"/><path d="M9 10c2-1.500 5-1.500 8-.5-1 3-3.500 4.500-6.500 4z" fill="#f8b818"/><path d="M3.500 10.500c1.500-.5 3.500 0 5 1l.5 5.500c-3-.5-5-3-5.500-6.500z" fill="#28a838"/><path d="M7.500 8l1.500 2-.5 4-1.500-3z" fill="#1a3a9a"/></svg>
<div class="a" style="left:636px;top:743px;line-height:20px;">Мои веб-узлы MSN</div>
<!-- folders -->
<svg class="a" style="left:850px;top:577px;" width="72" height="104" viewBox="0 0 72 104">
<defs><linearGradient id="fb850" x1="0" x2="1"><stop offset="0" stop-color="#f3d26e"/><stop offset="1" stop-color="#fbe18c"/></linearGradient><linearGradient id="ff850" x1="0" x2="1"><stop offset="0" stop-color="#ffeba8"/><stop offset="1" stop-color="#fbe08e"/></linearGradient></defs>
<path d="M22.500 99.500l3-6 14-5.500-17 0z" fill="#000" opacity=".08"/>
<path d="M1 2h58.500v52l1.200 1.300h3.500l2 2v27h-60z" fill="url(#fb850)"/>
<path d="M1 2l21.500 16v81.500l-21.500-15.500z" fill="url(#ff850)"/>
</svg>
<svg class="a" style="left:1009px;top:577px;" width="72" height="104" viewBox="0 0 72 104">
<defs><linearGradient id="fb1009" x1="0" x2="1"><stop offset="0" stop-color="#f3d26e"/><stop offset="1" stop-color="#fbe18c"/></linearGradient><linearGradient id="ff1009" x1="0" x2="1"><stop offset="0" stop-color="#ffeba8"/><stop offset="1" stop-color="#fbe08e"/></linearGradient></defs>
<path d="M22.500 99.500l3-6 14-5.500-17 0z" fill="#000" opacity=".08"/>
<path d="M1 2h58.500v52l1.200 1.300h3.500l2 2v27h-60z" fill="url(#fb1009)"/>
<path d="M1 2l21.500 16v81.500l-21.500-15.500z" fill="url(#ff1009)"/>
</svg>
<div class="a" style="left:809px;top:682px;width:160px;text-align:center;line-height:20px;">Альбом камеры</div>
<div class="a" style="left:968px;top:682px;width:160px;text-align:center;line-height:20px;">Сохраненные<br>фотографии</div>
<!-- bottom -->
<div class="a" style="left:582px;top:761px;width:602px;height:89px;background:#f0f0f0;"></div>
<div class="a" style="left:715px;top:781px;line-height:20px;font-size:13.6px;">Имя файла:</div>
<div class="a" style="left:797px;top:777px;width:134px;height:26px;box-sizing:border-box;border:1px solid #7a7a7a;background:#fff;"></div>
<svg class="a" style="left:915px;top:787px;" width="10" height="7" viewBox="0 0 10 7"><path d="M.8 1l4.200 4.300 4.200-4.300" fill="none" stroke="#555" stroke-width="1.100"/></svg>
<div class="a" style="left:946px;top:777px;width:224px;height:26px;box-sizing:border-box;border:1px solid #adadad;background:#e1e1e1;line-height:24px;"><span class="a" style="left:4px;">Любой файл (*.*)</span></div>
<svg class="a" style="left:1153px;top:787px;" width="10" height="7" viewBox="0 0 10 7"><path d="M.8 1l4.200 4.300 4.200-4.300" fill="none" stroke="#555" stroke-width="1.100"/></svg>
<div class="a" style="left:946px;top:812px;width:104px;height:29px;box-sizing:border-box;border:2px solid #0078d7;background:#e1e1e1;line-height:25px;text-align:center;">Открыть</div>
<div class="a" style="left:1066px;top:812px;width:104px;height:29px;box-sizing:border-box;border:1px solid #adadad;background:#e1e1e1;line-height:27px;text-align:center;">Отмена</div>
</div>

</body></html>
